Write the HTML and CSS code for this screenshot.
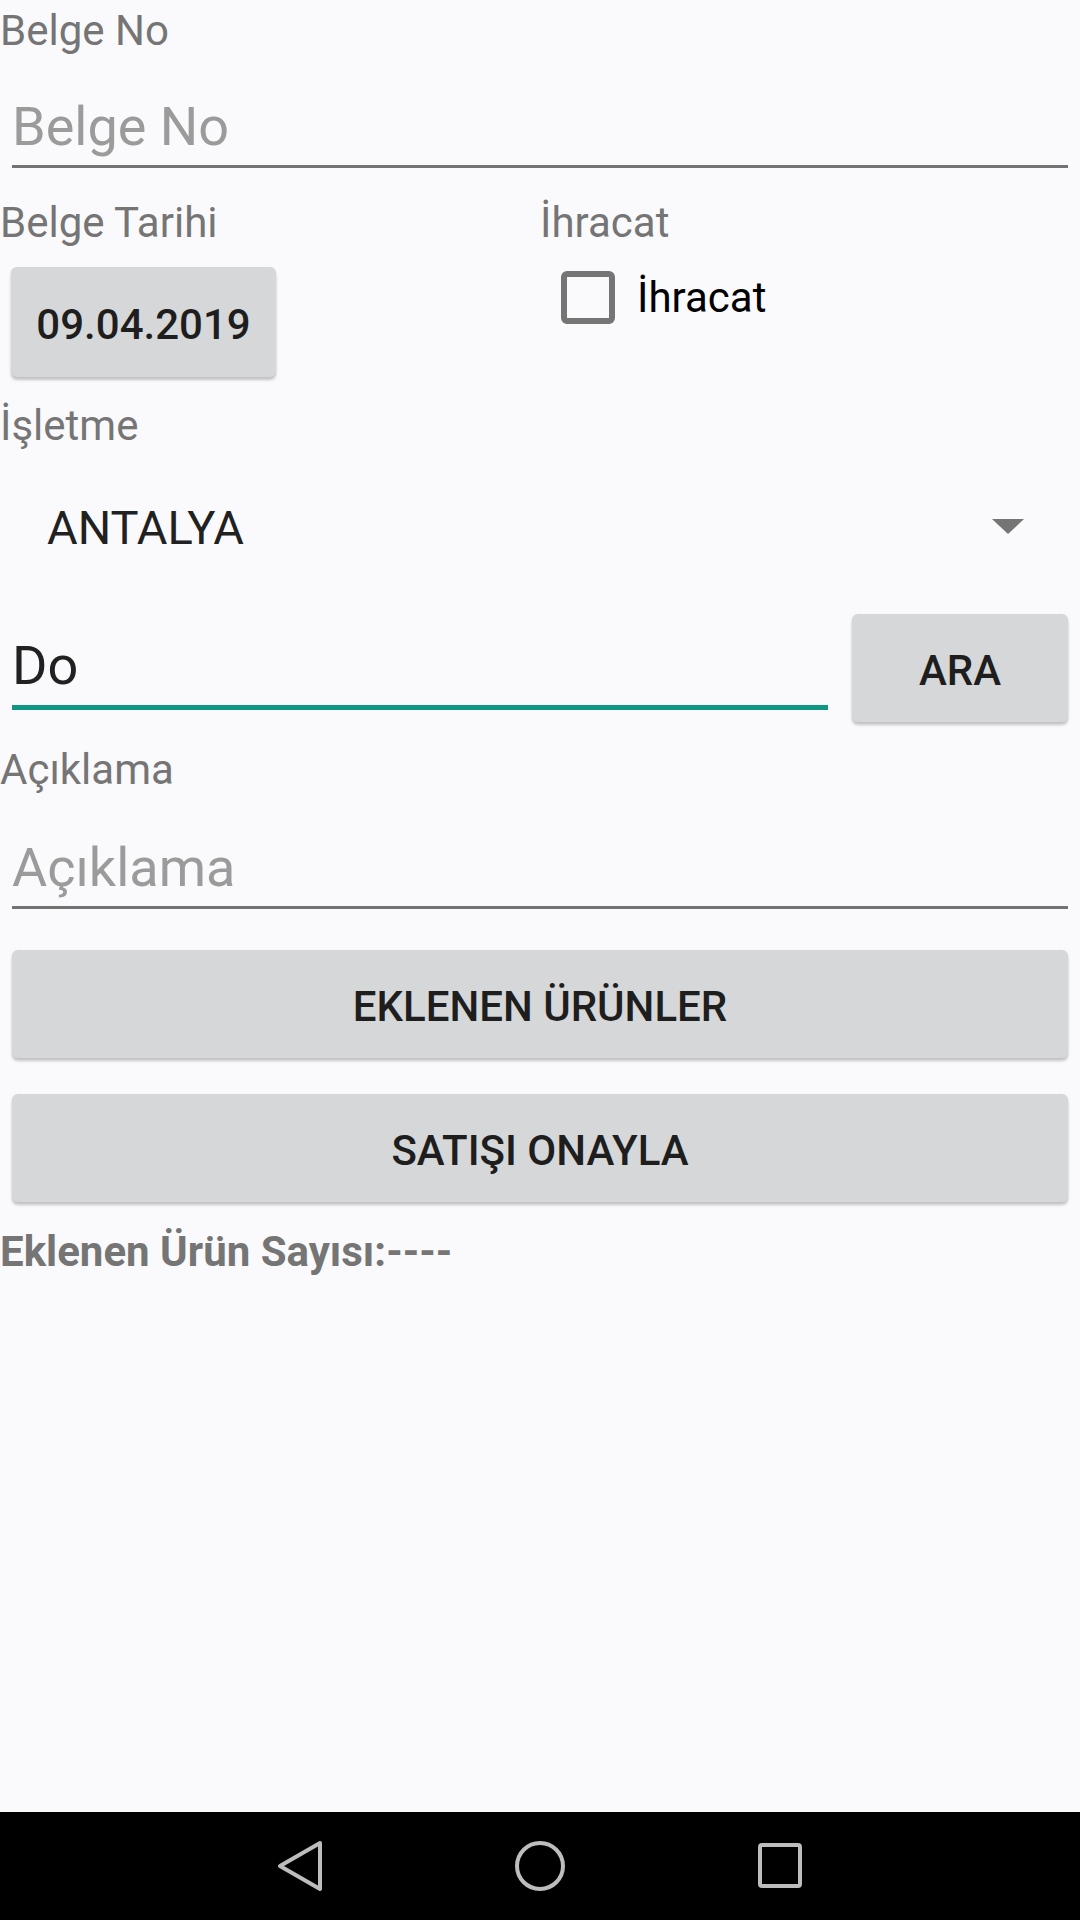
FILE: index.html
```html
<!DOCTYPE html>
<html lang="tr">
<head>
<meta charset="utf-8">
<title>Satış</title>
<link rel="stylesheet" href="styles.css">
</head>
<body>
<div class="screen">
  <main class="form">
    <div class="label l-first">Belge No</div>
    <div class="field field-plain"><span class="ph">Belge No</span></div>

    <div class="row2">
      <div class="col">
        <div class="label l-row">Belge Tarihi</div>
        <div class="btn date">09.04.2019</div>
      </div>
      <div class="col">
        <div class="label l-row">İhracat</div>
        <div class="check"><span class="box"></span><span class="check-text">İhracat</span></div>
      </div>
    </div>

    <div class="label l-isletme">İşletme</div>
    <div class="spinner"><span class="spinner-text">ANTALYA</span><span class="arrow"></span></div>

    <div class="search">
      <div class="field field-focus">Do</div>
      <div class="btn ara">ARA</div>
    </div>

    <div class="label l-aciklama">Açıklama</div>
    <div class="field field-plain field-aciklama"><span class="ph">Açıklama</span></div>

    <div class="btn wide b-first">EKLENEN ÜRÜNLER</div>
    <div class="btn wide b-second">SATIŞI ONAYLA</div>

    <div class="label count">Eklenen Ürün Sayısı:----</div>
  </main>

  <nav class="navbar">
    <svg class="nav-icon" width="60" height="60" viewBox="0 0 60 60">
      <path d="M50 7 L10 30 L50 53 Z" fill="none" stroke="#bdbdbd" stroke-width="4" stroke-linejoin="round"/>
    </svg>
    <svg class="nav-icon" width="60" height="60" viewBox="0 0 60 60">
      <circle cx="30" cy="30" r="23" fill="none" stroke="#bdbdbd" stroke-width="4"/>
    </svg>
    <svg class="nav-icon" width="60" height="60" viewBox="0 0 60 60">
      <rect x="10" y="9" width="40" height="41" rx="2" fill="none" stroke="#bdbdbd" stroke-width="4"/>
    </svg>
  </nav>
</div>
</body>
</html>
```

FILE: styles.css
```css
html, body {
  margin: 0;
  padding: 0;
}

body {
  background: #fafafc;
  font-family: Roboto, "Noto Sans", "Liberation Sans", sans-serif;
}

.screen {
  width: 1080px;
  height: 1920px;
  display: flex;
  flex-direction: column;
  overflow: hidden;
}

.form {
  flex: 1;
}

.label {
  font-size: 42px;
  line-height: 62px;
  color: #757575;
  white-space: nowrap;
}

.l-first { padding-top: 0; }
.l-row { padding-top: 24px; }
.l-isletme { padding-top: 18px; }
.l-aciklama { padding-top: 17px; }

.count {
  padding-top: 19px;
  font-weight: 700;
}

.field {
  margin: 0 12px;
  font-size: 54px;
  white-space: nowrap;
}

.field-plain {
  padding-top: 27px;
  line-height: 76px;
  border-bottom: 3px solid #737373;
}

.field-aciklama {
  padding-top: 29px;
}

.ph {
  color: #9b9b9b;
}

.field-focus {
  width: 816px;
  flex: none;
  padding-top: 30px;
  line-height: 78px;
  color: #212121;
  border-bottom: 5px solid #0f9784;
}

.row2 {
  display: grid;
  grid-template-columns: 540px 540px;
}

.btn {
  box-sizing: border-box;
  display: flex;
  align-items: center;
  justify-content: center;
  padding-top: 5px;
  background: #d6d7d8;
  border-radius: 6px;
  box-shadow: 0 3px 3px rgba(0, 0, 0, 0.22), 0 0 1px rgba(0, 0, 0, 0.08);
  font-size: 42px;
  font-weight: 500;
  color: #1e1e1e;
  white-space: nowrap;
}

.date {
  margin: 13px 0 0 11px;
  width: 265px;
  height: 110px;
}

.check {
  display: flex;
  align-items: center;
  margin: 17px 0 0 21px;
}

.box {
  box-sizing: border-box;
  width: 54px;
  height: 53px;
  border: 6px solid #757575;
  border-radius: 6px;
}

.check-text {
  margin-left: 22px;
  font-size: 42px;
  color: #000;
}

.spinner {
  height: 140px;
  display: flex;
  align-items: center;
  padding-left: 47px;
}

.spinner-text {
  font-size: 47px;
  color: #212121;
}

.arrow {
  margin-left: auto;
  margin-right: 56px;
  margin-top: -2px;
  width: 0;
  height: 0;
  border-left: 16px solid transparent;
  border-right: 16px solid transparent;
  border-top: 15px solid #757575;
}

.search {
  display: flex;
  align-items: flex-start;
}

.ara {
  margin: 17px 0 0 12px;
  width: 216px;
  height: 108px;
}

.wide {
  margin: 41px 12px 0;
  height: 108px;
}

.b-second {
  margin-top: 36px;
}

.navbar {
  height: 108px;
  flex: none;
  background: #000;
  display: flex;
  align-items: center;
  justify-content: center;
  gap: 180px;
}

.nav-icon {
  display: block;
}
```
